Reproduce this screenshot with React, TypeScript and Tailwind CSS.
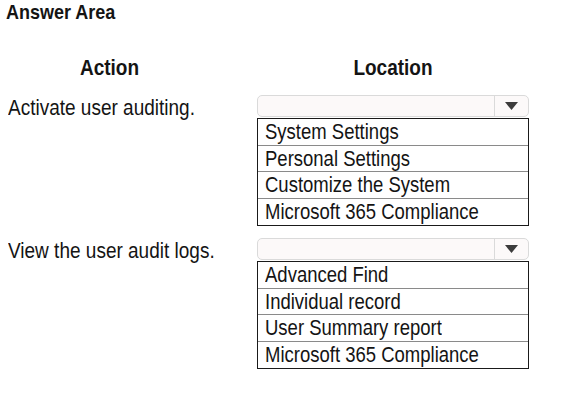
const rows = [
  {
    action: "Activate user auditing.",
    options: ["System Settings", "Personal Settings", "Customize the System", "Microsoft 365 Compliance"],
  },
  {
    action: "View the user audit logs.",
    options: ["Advanced Find", "Individual record", "User Summary report", "Microsoft 365 Compliance"],
  },
];

// the screenshot's text is a bit taller than its width implies, so stretch it a little
const tall = "inline-block origin-center scale-y-[1.15]";

function Dropdown({ options }: { options: string[] }) {
  return (
    <div className="w-[272px]">
      <div className="flex h-[22px] rounded-[5px] border border-[#dadada] bg-[#fcf9f9]">
        <div className="flex-1" />
        <div className="flex w-[34px] items-center justify-center border-l border-[#dadada]">
          <svg width="13" height="8" viewBox="0 0 13 8">
            <path d="M0 0 H13 L6.5 8 Z" fill="#3c3c3c" />
          </svg>
        </div>
      </div>
      <div className="mt-[1px] divide-y divide-[#8a8a8a] border border-[#1a1a1a] bg-white">
        {options.map((opt) => (
          <div key={opt} className="h-[26.5px] pl-[7px] text-[18.5px] leading-[26.5px]">
            <span className={tall}>{opt}</span>
          </div>
        ))}
      </div>
    </div>
  );
}

export default function App() {
  return (
    <div className="h-[409px] w-[563px] bg-white pl-[6px] pt-[1px] font-['Liberation_Sans',Arial,sans-serif] text-[#141414]">
      <h1 className="text-[18px] font-bold leading-[22px]">
        <span className={tall}>Answer Area</span>
      </h1>

      <div className="mt-[33px] grid grid-cols-[251px_272px] text-[19px] font-bold leading-[24px]">
        <div className="w-[207px] text-center">
          <span className={tall}>Action</span>
        </div>
        <div className="text-center">
          <span className={tall}>Location</span>
        </div>
      </div>

      <div className="mt-[15px] flex flex-col gap-[12px]">
        {rows.map((row) => (
          <div key={row.action} className="grid grid-cols-[251px_272px]">
            <div className="pl-[2px] pt-[1px] text-[19px] leading-[24px]">
              <span className={tall}>{row.action}</span>
            </div>
            <Dropdown options={row.options} />
          </div>
        ))}
      </div>
    </div>
  );
}
